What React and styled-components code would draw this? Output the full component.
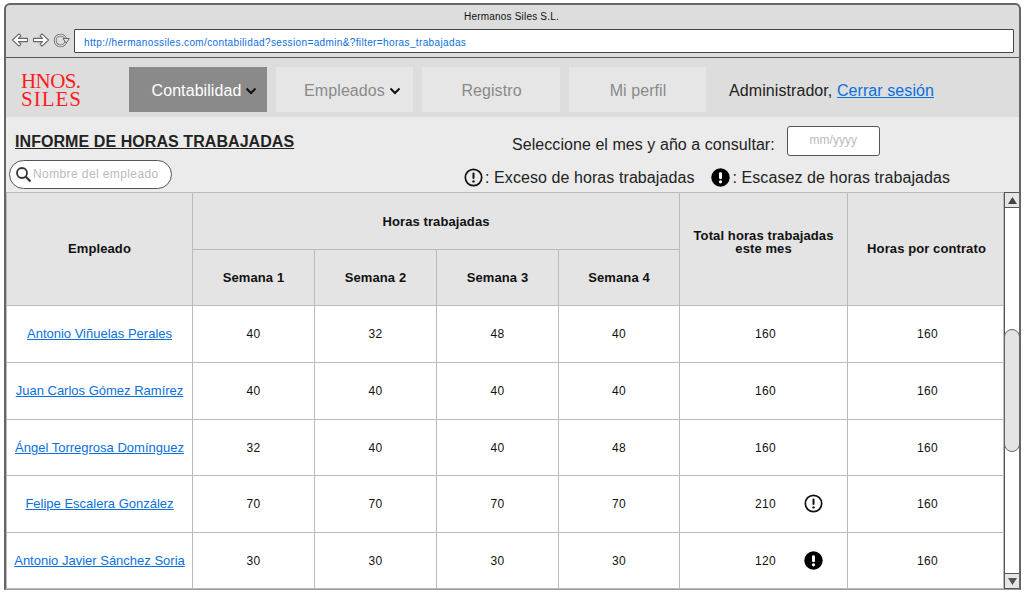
import React from 'react';
import styled, { createGlobalStyle } from 'styled-components';

const GlobalStyle = createGlobalStyle`
	html, body {
		margin: 0;
		padding: 0;
		background: #fff;
		font-family: "Liberation Sans", Arial, sans-serif;
	}
`;

const Page = styled.div`
	width: 1027px;
	height: 594px;
	padding: 3px 0 0 4px;
	box-sizing: border-box;
	overflow: hidden;
`;

const Frame = styled.div`
	width: 1017px;
	height: 587px;
	box-sizing: border-box;
	border: 2px solid #666;
	border-bottom: 1px solid #999;
	border-radius: 6px 6px 0 0;
	background: #ddd;
	display: flex;
	flex-direction: column;
	overflow: hidden;
`;

const BrowserBar = styled.div`
	height: 53px;
	flex: none;
	box-sizing: border-box;
	border-bottom: 1px solid #555;
	display: flex;
	flex-direction: column;
`;

const WindowTitle = styled.div`
	height: 24px;
	line-height: 23px;
	text-align: center;
	font-size: 10px;
	letter-spacing: 0.2px;
	color: #111;
	padding-right: 2px;
`;

const AddressRow = styled.div`
	display: flex;
	align-items: center;
	padding-left: 5px;
	gap: 3px;
`;

const NavIcon = styled.svg`
	width: 18px;
	height: 18px;
	flex: none;
`;

const AddressInput = styled.div`
	width: 940px;
	height: 24px;
	box-sizing: border-box;
	background: #fff;
	border: 1px solid #444;
	border-radius: 1px;
	padding-left: 9px;
	line-height: 25px;
	font-size: 10px;
	letter-spacing: 0.37px;
	color: #0a6fe0;
`;

const Nav = styled.nav`
	height: 59px;
	flex: none;
	box-sizing: border-box;
	display: flex;
	align-items: flex-start;
	padding-top: 9px;
`;

const Logo = styled.div`
	width: 123px;
	flex: none;
	box-sizing: border-box;
	padding: 5px 0 0 15px;
	font-family: "Liberation Serif", serif;
	font-size: 21px;
	line-height: 18px;
	color: #ff1c1c;
`;

const LogoLine = styled.div`
	letter-spacing: ${p => p.$spacing}px;
`;

const MenuItem = styled.div`
	width: ${p => p.$width}px;
	height: 45px;
	margin-right: 9px;
	flex: none;
	display: flex;
	align-items: center;
	justify-content: center;
	gap: 4px;
	padding: 2px 0 0 ${p => p.$pad || 1}px;
	box-sizing: border-box;
	font-size: 16px;
	letter-spacing: 0.08px;
	background: ${p => (p.$active ? '#8a8a8a' : '#e6e6e6')};
	color: ${p => (p.$active ? '#fff' : '#8a8a8a')};
`;

const Caret = styled.svg`
	width: 12px;
	height: 8px;
	flex: none;
`;

const UserInfo = styled.div`
	margin-left: 14px;
	height: 45px;
	line-height: 47px;
	font-size: 16px;
	letter-spacing: 0.08px;
	color: #222;
`;

const Link = styled.a`
	color: #0a6fe0;
	text-decoration: underline;
`;

const EmployeeLink = styled(Link)`
	font-size: 13px;
	letter-spacing: 0;
`;

const Content = styled.main`
	flex: 1;
	min-height: 0;
	background: #ebebeb;
	display: flex;
	flex-direction: column;
`;

const ReportHeader = styled.div`
	height: 75px;
	flex: none;
	display: flex;
	justify-content: space-between;
`;

const ReportLeft = styled.div`
	padding-left: 3px;
`;

const Title = styled.h1`
	margin: 15px 0 0 6px;
	font-size: 16px;
	line-height: 20px;
	font-weight: 700;
	letter-spacing: 0.07px;
	color: #222;
	text-decoration: underline;
`;

const SearchBox = styled.div`
	margin-top: 8px;
	width: 163px;
	height: 29px;
	box-sizing: border-box;
	background: #fff;
	border: 1px solid #555;
	border-radius: 15px;
	display: flex;
	align-items: center;
	padding-left: 5px;
	gap: 1px;
	font-size: 12px;
	letter-spacing: 0.4px;
	color: #bbb;
`;

const Placeholder = styled.span`
	margin-top: -2px;
`;

const SearchIcon = styled.svg`
	width: 17px;
	height: 17px;
	flex: none;
`;

const ReportRight = styled.div`
	width: 559px;
	flex: none;
	font-size: 16px;
	letter-spacing: 0.06px;
	color: #222;
`;

const MonthRow = styled.div`
	height: 30px;
	margin-top: 9px;
	padding-left: 52px;
	display: flex;
	align-items: center;
	gap: 12px;
`;

const MonthLabel = styled.span`
	padding-top: 8px;
`;

const MonthInput = styled.div`
	width: 93px;
	height: 30px;
	box-sizing: border-box;
	background: #fff;
	border: 1px solid #555;
	border-radius: 3px;
	text-align: center;
	line-height: 27px;
	font-size: 12px;
	color: #bbb;
`;

const LegendRow = styled.div`
	margin-top: 12px;
	padding-left: 4px;
	display: flex;
	align-items: center;
	font-size: 16px;
	letter-spacing: 0.08px;
`;

const LegendItem = styled.span`
	display: flex;
	align-items: center;
	gap: 2px;
	margin-right: ${p => p.$gap || 0}px;
`;

const AlertIcon = styled.svg`
	width: 19px;
	height: 19px;
	flex: none;
	display: block;
`;

const TableArea = styled.div`
	flex: 1;
	min-height: 0;
	display: flex;
`;

const Table = styled.table`
	width: 997px;
	flex: none;
	table-layout: fixed;
	border-collapse: collapse;
	align-self: flex-start;
	background: #fff;
`;

const HeadCell = styled.th`
	height: ${p => p.$height || 56}px;
	padding: 0 0 ${p => p.$lift || 0}px ${p => p.$shift || 0}px;
	box-sizing: border-box;
	background: #e4e4e4;
	border: 1px solid #bbb;
	font-size: 13px;
	line-height: 13px;
	font-weight: 700;
	letter-spacing: 0.1px;
	color: #111;
`;

const Cell = styled.td`
	position: relative;
	height: ${p => p.$height}px;
	padding: 0 0 ${p => p.$height - 56}px ${p => p.$shift || 0}px;
	box-sizing: border-box;
	border: 1px solid #bbb;
	text-align: center;
	font-size: 12px;
	letter-spacing: 0.3px;
	color: #111;
`;

const FlagIcon = styled.span`
	position: absolute;
	left: 124px;
	top: 18px;
`;

const Scrollbar = styled.div`
	width: 16px;
	flex: none;
	height: 397px;
	box-sizing: border-box;
	background: #fff;
	border-left: 1px solid #555;
	border-right: 1px solid #555;
	display: flex;
	flex-direction: column;
`;

const ScrollButton = styled.div`
	height: 14px;
	flex: none;
	background: #e6e6e6;
	border-top: 1px solid #555;
	border-bottom: 1px solid #555;
	display: flex;
	align-items: center;
	justify-content: center;
	margin-top: ${p => (p.$bottom ? 'auto' : 0)};
`;

const ScrollThumb = styled.div`
	margin: 121px -1px 0;
	height: 123px;
	flex: none;
	box-sizing: border-box;
	background: #e4e4e4;
	border: 1px solid #666;
	border-radius: 8px;
`;

const Arrow = styled.svg`
	width: 9px;
	height: 7px;
`;

const colWidths = [186, 122, 122, 122, 121, 168, 156];

const employees = [
	{ name: 'Antonio Viñuelas Perales', weeks: [40, 32, 48, 40], total: 160, height: 57 },
	{ name: 'Juan Carlos Gómez Ramírez', weeks: [40, 40, 40, 40], total: 160, height: 57 },
	{ name: 'Ángel Torregrosa Domínguez', weeks: [32, 40, 40, 48], total: 160, height: 56 },
	{ name: 'Felipe Escalera González', weeks: [70, 70, 70, 70], total: 210, height: 57, flag: 'excess' },
	{ name: 'Antonio Javier Sánchez Soria', weeks: [30, 30, 30, 30], total: 120, height: 56, flag: 'shortage' },
];

const ExcessIcon = () => (
	<AlertIcon viewBox="0 0 19 19">
		<circle cx="9.5" cy="9.5" r="8.2" fill="none" stroke="#111" strokeWidth="1.7" />
		<rect x="8.5" y="4.6" width="2" height="6.4" rx="1" fill="#111" />
		<circle cx="9.5" cy="13.4" r="1.2" fill="#111" />
	</AlertIcon>
);

const ShortageIcon = () => (
	<AlertIcon viewBox="0 0 19 19">
		<circle cx="9.5" cy="9.5" r="9.2" fill="#000" />
		<rect x="8" y="4.2" width="3" height="7" rx="1.4" fill="#fff" />
		<circle cx="9.5" cy="13.8" r="1.6" fill="#fff" />
	</AlertIcon>
);

const BackArrow = ({ flip }) => (
	<NavIcon viewBox="0 0 18 18" style={flip ? { transform: 'scaleX(-1)' } : undefined}>
		<path d="M1.5 8 L8 1.8 L10 3.8 L7.4 6.4 L16.5 6.4 L16.5 9.6 L7.4 9.6 L10 12.2 L8 14.2 Z" fill="#fff" stroke="#666" strokeWidth="1.1" strokeLinejoin="round" />
	</NavIcon>
);

const ReloadIcon = () => (
	<NavIcon viewBox="0 0 18 18">
		<circle cx="7.5" cy="8.5" r="5.4" fill="none" stroke="#666" strokeWidth="2.8" />
		<circle cx="7.5" cy="8.5" r="5.4" fill="none" stroke="#e8e8e8" strokeWidth="1.1" />
		<path d="M10 6.5 L16.3 6.5 L13.2 11 Z" fill="#e8e8e8" stroke="#666" strokeWidth="1" strokeLinejoin="round" />
	</NavIcon>
);

const CaretIcon = ({ color }) => (
	<Caret viewBox="0 0 12 8">
		<path d="M1.5 1.5 L6 6 L10.5 1.5" fill="none" stroke={color} strokeWidth="2" />
	</Caret>
);

const App = () => (
	<Page>
		<GlobalStyle />
		<Frame>
			<BrowserBar>
				<WindowTitle>Hermanos Siles S.L.</WindowTitle>
				<AddressRow>
					<BackArrow />
					<BackArrow flip />
					<ReloadIcon />
					<AddressInput>http://hermanossiles.com/contabilidad?session=admin&amp;?filter=horas_trabajadas</AddressInput>
				</AddressRow>
			</BrowserBar>
			<Nav>
				<Logo>
					<LogoLine $spacing={-0.6}>HNOS.</LogoLine>
					<LogoLine $spacing={1}>SILES</LogoLine>
				</Logo>
				<MenuItem $width={138} $active $pad={13}>
					Contabilidad <CaretIcon color="#111" />
				</MenuItem>
				<MenuItem $width={137} $pad={16}>
					Empleados <CaretIcon color="#111" />
				</MenuItem>
				<MenuItem $width={138}>Registro</MenuItem>
				<MenuItem $width={137}>Mi perfil</MenuItem>
				<UserInfo>
					Administrador, <Link href="#">Cerrar sesión</Link>
				</UserInfo>
			</Nav>
			<Content>
				<ReportHeader>
					<ReportLeft>
						<Title>INFORME DE HORAS TRABAJADAS</Title>
						<SearchBox>
							<SearchIcon viewBox="0 0 17 17">
								<circle cx="7" cy="7" r="5" fill="none" stroke="#333" strokeWidth="1.8" />
								<path d="M10.8 10.8 L15.5 15.5" stroke="#333" strokeWidth="2.2" />
							</SearchIcon>
							<Placeholder>Nombre del empleado</Placeholder>
						</SearchBox>
					</ReportLeft>
					<ReportRight>
						<MonthRow>
							<MonthLabel>Seleccione el mes y año a consultar:</MonthLabel>
							<MonthInput>mm/yyyy</MonthInput>
						</MonthRow>
						<LegendRow>
							<LegendItem $gap={17}><ExcessIcon />: Exceso de horas trabajadas</LegendItem>
							<LegendItem><ShortageIcon />: Escasez de horas trabajadas</LegendItem>
						</LegendRow>
					</ReportRight>
				</ReportHeader>
				<TableArea>
					<Table>
						<colgroup>
							{colWidths.map((w, i) => <col key={i} style={{ width: w }} />)}
						</colgroup>
						<thead>
							<tr>
								<HeadCell rowSpan={2} $lift={2}>Empleado</HeadCell>
								<HeadCell colSpan={4} $height={57}>Horas trabajadas</HeadCell>
								<HeadCell rowSpan={2} $lift={14}>Total horas trabajadas<br />este mes</HeadCell>
								<HeadCell rowSpan={2} $lift={2} $shift={2}>Horas por contrato</HeadCell>
							</tr>
							<tr>
								{[1, 2, 3, 4].map(n => <HeadCell key={n}>Semana {n}</HeadCell>)}
							</tr>
						</thead>
						<tbody>
							{employees.map(emp => (
								<tr key={emp.name}>
									<Cell $height={emp.height}><EmployeeLink href="#">{emp.name}</EmployeeLink></Cell>
									{emp.weeks.map((h, j) => <Cell key={j} $height={emp.height}>{h}</Cell>)}
									<Cell $height={emp.height} $shift={4}>
										{emp.total}
										{emp.flag && (
											<FlagIcon>{emp.flag === 'excess' ? <ExcessIcon /> : <ShortageIcon />}</FlagIcon>
										)}
									</Cell>
									<Cell $height={emp.height} $shift={4}>160</Cell>
								</tr>
							))}
						</tbody>
					</Table>
					<Scrollbar>
						<ScrollButton>
							<Arrow viewBox="0 0 9 7"><path d="M4.5 0 L9 7 L0 7 Z" fill="#444" /></Arrow>
						</ScrollButton>
						<ScrollThumb />
						<ScrollButton $bottom>
							<Arrow viewBox="0 0 9 7"><path d="M0 0 L9 0 L4.5 7 Z" fill="#555" /></Arrow>
						</ScrollButton>
					</Scrollbar>
				</TableArea>
			</Content>
		</Frame>
	</Page>
);

export default App;
